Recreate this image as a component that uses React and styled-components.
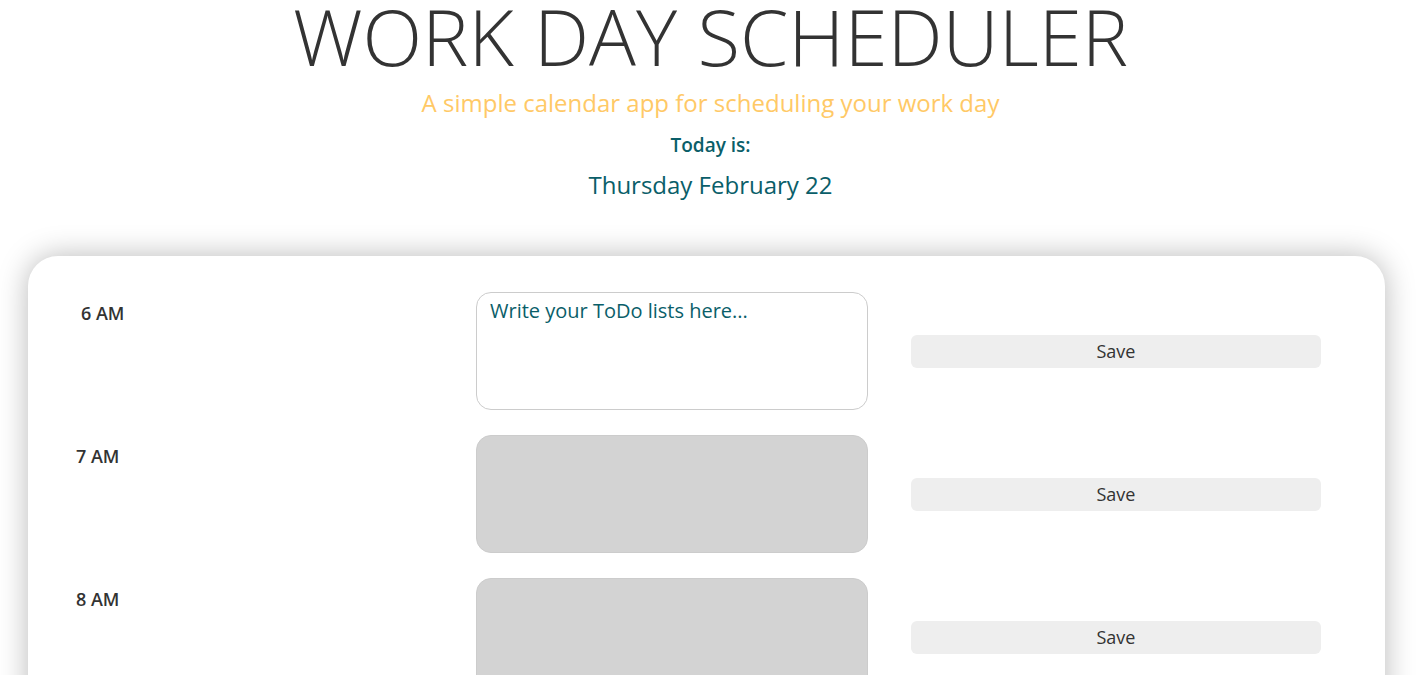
import React from 'react';
import styled, {createGlobalStyle} from 'styled-components';

const GlobalStyle = createGlobalStyle`
	body {
		margin: 0;
		background: #fff;
		font-family: 'Open Sans', 'Noto Sans', sans-serif;
		color: #333;
		overflow: hidden;
	}
`;

const hours = [
	{label: '6 AM', state: 'present', indent: 53},
	{label: '7 AM', state: 'past', indent: 48},
	{label: '8 AM', state: 'past', indent: 48},
	{label: '9 AM', state: 'past', indent: 48},
];

export default function App() {
	return (
		<>
			<GlobalStyle />
			<Header>
				<Title>WORK DAY SCHEDULER</Title>
				<Lead>A simple calendar app for scheduling your work day</Lead>
				<TodayLabel>Today is:</TodayLabel>
				<CurrentDay>Thursday February 22</CurrentDay>
			</Header>
			<Card>
				{hours.map((h) => (
					<Row key={h.label}>
						<Hour $indent={h.indent}>{h.label}</Hour>
						<Entry $state={h.state} placeholder={h.state === 'present' ? 'Write your ToDo lists here...' : ''} />
						<SaveBtn>Save</SaveBtn>
					</Row>
				))}
			</Card>
		</>
	);
}

const Header = styled.header`
	display: flex;
	flex-direction: column;
	align-items: center;
	text-align: center;
`;

const Title = styled.h1`
	margin: -3px 0 0;
	font-size: 78px;
	font-weight: 300;
	line-height: 1;
	color: #333;
`;

const Lead = styled.p`
	margin: 11px 0 0;
	font-size: 24px;
	line-height: 33px;
	color: #ffc966;
`;

const TodayLabel = styled.p`
	margin: 12px 0 0;
	font-size: 19px;
	font-weight: 600;
	line-height: 28px;
	color: #0a5e69;
`;

const CurrentDay = styled.p`
	margin: 9px 0 0;
	font-size: 24px;
	font-weight: 500;
	line-height: 33px;
	color: #0a5e69;
`;

const Card = styled.main`
	margin: 55px 36px 0 28px;
	padding: 36px 0 0;
	background: #fff;
	border-radius: 30px;
	box-shadow: 0 0 30px rgba(0, 0, 0, 0.28);
	display: flex;
	flex-direction: column;
	gap: 25px;
`;

const Row = styled.section`
	display: grid;
	grid-template-columns: 405px 392px 410px;
	column-gap: 43px;
	align-items: center;
`;

const Hour = styled.div`
	align-self: start;
	padding: 8px 0 0 ${(p) => p.$indent}px;
	font-size: 18px;
	font-weight: 600;
	line-height: 26px;
	color: #333;
`;

const Entry = styled.textarea`
	box-sizing: border-box;
	width: 392px;
	height: 118px;
	padding: 4px 13px;
	margin: 0;
	resize: none;
	border: 1px solid #ccc;
	border-radius: 15px;
	background: ${(p) => (p.$state === 'past' ? '#d3d3d3' : '#fff')};
	font-family: 'Open Sans', sans-serif;
	font-size: 20px;
	line-height: 28px;
	color: #0a5e69;
	&::placeholder {
		color: #0a5e69;
		opacity: 1;
	}
`;

const SaveBtn = styled.button`
	height: 33px;
	width: 410px;
	border: none;
	border-radius: 6px;
	background: #eee;
	font-family: 'Open Sans', sans-serif;
	font-size: 18px;
	color: #333;
	cursor: pointer;
`;
